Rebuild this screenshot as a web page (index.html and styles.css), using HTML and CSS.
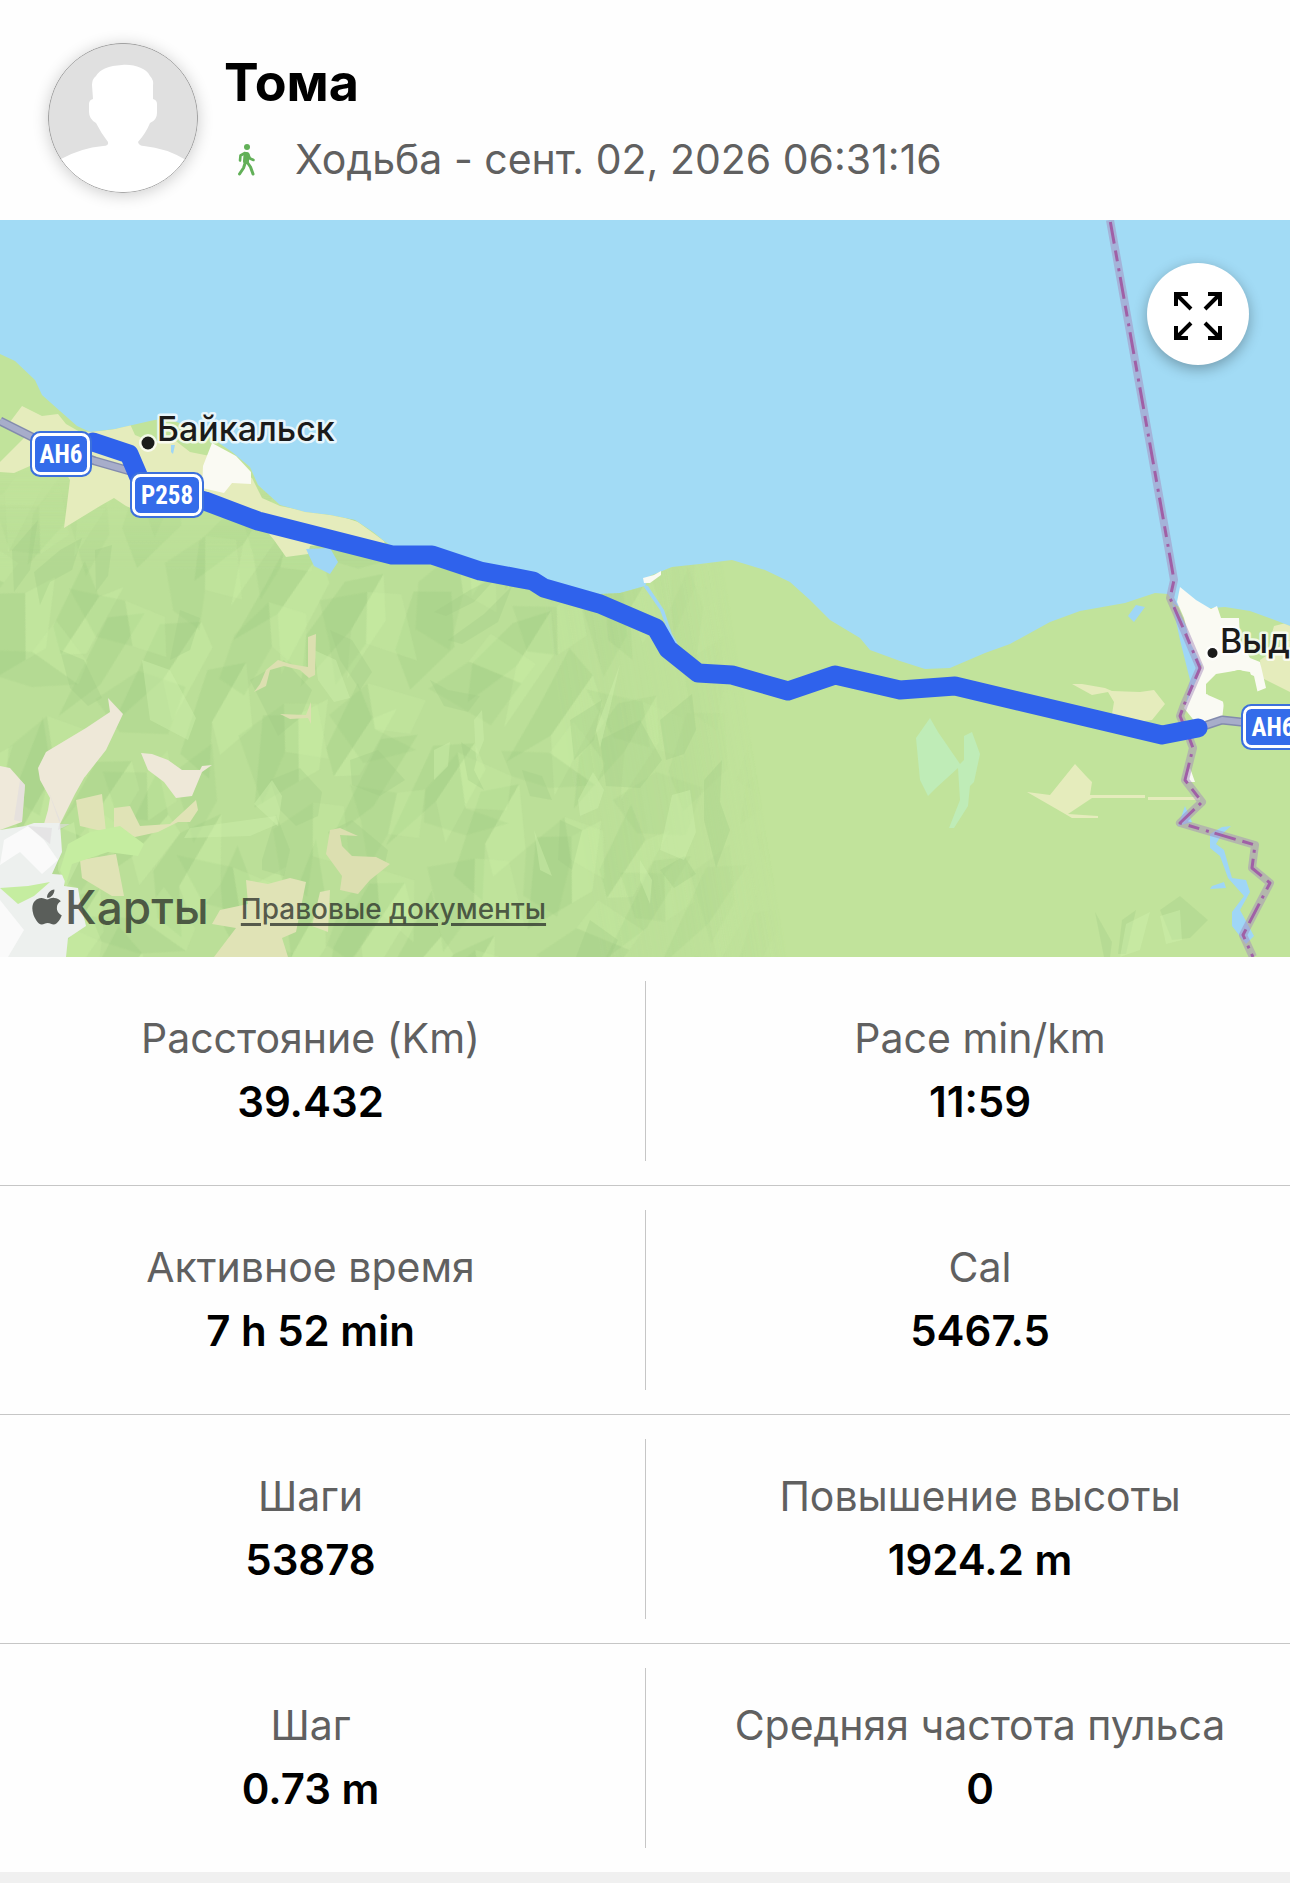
FILE: index.html
```html
<!DOCTYPE html>
<html lang="ru">
<head>
<meta charset="utf-8">
<meta name="viewport" content="width=device-width, initial-scale=1">
<title>Тома – Ходьба</title>
<link rel="stylesheet" href="styles.css">
</head>
<body>
<main class="activity">
  <header class="profile">
    <svg class="avatar" viewBox="0 0 150 150" aria-hidden="true">
      <defs><clipPath id="avatar-clip"><circle cx="75" cy="75" r="75"/></clipPath></defs>
      <g clip-path="url(#avatar-clip)">
        <rect width="150" height="150" fill="#e0e0e0"/>
        <path fill="#fff" d="M74 22C86 21 98 25 102 33Q106 37 105 43V56Q109 57 109 61V70Q109 77 102 80Q98 90 90 99Q91 103 96 103Q118 105 138 117L150 150H0L13 116Q33 105 55 103Q61 103 60 99Q53 90 48 80Q41 76 41 69V61Q41 57 45 56L44 42Q44 36 48 33Q54 23 74 22Z"/>
      </g>
      <circle cx="75" cy="75" r="74.6" fill="none" stroke="#8b8b8b" stroke-width=".8"/>
    </svg>
    <div class="profile-text">
      <h1 class="name">Тома</h1>
      <p class="summary">
        <svg class="walk" viewBox="0 0 20 34" aria-hidden="true">
          <circle cx="11" cy="5" r="3" fill="#62b058"/>
          <g fill="none" stroke="#62b058" stroke-linecap="round" stroke-linejoin="round">
            <path stroke-width="6" d="M10.500 13L10 19"/>
            <path stroke-width="2.600" d="M9 11L4.500 13.500L4 18.500M12 12L14 16.500L17.500 18"/>
            <path stroke-width="3" d="M9.500 20L7.500 26L3.500 32M11 20L14.500 25L17 32"/>
          </g>
        </svg>
        <span>Ходьба - сент. 02, 2026 06:31:16</span>
      </p>
    </div>
  </header>

  <section class="map" aria-label="Карта маршрута">
    <svg class="map-canvas" viewBox="0 0 1290 737" preserveAspectRatio="xMidYMid slice">
      <defs>
        <path id="coast" d="M0 134L15 141L35 160L42 175L60 191L77 206L90 212L115 209L150 201L165 198L200 210L232 232L250 247L258 265L280 285L305 292L330 295L355 300L373 312L384 321L400 332L480 352L545 369L600 374L620 373L645 366L650 356L672 347L700 344L732 340L765 350L790 362L810 380L830 400L860 418L870 430L900 441L925 449L950 448L985 433L1010 424L1050 402L1080 391L1125 383L1155 373L1168 374L1174 384L1185 390L1225 387L1250 391L1280 402L1290 406V737H0Z"/>
        <clipPath id="land"><use href="#coast"/></clipPath>
        <linearGradient id="fade" gradientUnits="userSpaceOnUse" x1="560" y1="500" x2="745" y2="470">
          <stop offset="0" stop-color="#fff"/><stop offset=".5" stop-color="#999"/><stop offset="1" stop-color="#000"/>
        </linearGradient>
        <linearGradient id="fade-top" gradientUnits="userSpaceOnUse" x1="0" y1="250" x2="0" y2="350">
          <stop offset="0" stop-color="#000"/><stop offset="1" stop-color="#000" stop-opacity="0"/>
        </linearGradient>
        <mask id="hills" maskUnits="userSpaceOnUse" x="0" y="0" width="1290" height="737">
          <rect width="1290" height="737" fill="url(#fade)"/>
          <rect width="1290" height="350" fill="url(#fade-top)"/>
        </mask>
        <g id="facets">
          <g fill="#8fc178" fill-opacity=".2">
            <path d="M8 10L36 2L24 42L12 70L2 48Z"/><path d="M60 0L84 20L70 48L52 66L58 30Z"/>
            <path d="M30 84L56 70L48 104L22 132L12 112Z"/><path d="M100 26L126 8L118 52L138 76L112 72L92 50Z"/>
            <path d="M84 84L112 92L100 130L74 152L80 118Z"/><path d="M150 20L176 36L194 74L168 62L150 42Z"/>
            <path d="M142 100L170 88L164 122L144 160L130 134Z"/><path d="M210 0L238 26L232 62L214 44Z"/>
            <path d="M200 90L230 82L252 108L232 138L206 122Z"/><path d="M10 160L42 150L32 186L8 218Z"/>
            <path d="M64 172L92 160L86 196L104 224L72 218Z"/><path d="M124 182L152 174L176 206L150 228Z"/>
            <path d="M188 146L212 160L202 196L186 184Z"/><path d="M226 168L254 158L244 202L222 226Z"/>
          </g>
          <g fill="#cdf0a8" fill-opacity=".34">
            <path d="M36 2L52 14L42 60L24 42Z"/><path d="M84 20L100 26L86 60L70 48Z"/>
            <path d="M56 70L74 90L60 136L48 104Z"/><path d="M126 8L150 42L140 66L118 52Z"/>
            <path d="M112 92L130 104L124 158L100 130Z"/><path d="M176 36L196 20L204 60L194 74Z"/>
            <path d="M170 88L188 110L178 146L164 122Z"/><path d="M238 26L256 50L248 80L232 62Z"/>
            <path d="M42 150L60 160L54 204L32 186Z"/><path d="M92 160L120 190L104 210L86 196Z"/>
            <path d="M212 160L228 150L222 190L202 196Z"/><path d="M152 174L170 160L188 196L176 206Z"/>
          </g>
        </g>
        <pattern id="relief" width="260" height="230" patternUnits="userSpaceOnUse" patternTransform="rotate(24) scale(1.15 1.9)">
          <use href="#facets"/>
        </pattern>
        <pattern id="relief-fine" width="260" height="230" patternUnits="userSpaceOnUse" patternTransform="translate(40 70) rotate(-22) scale(1.7 1.25)">
          <use href="#facets"/>
        </pattern>
      </defs>

      <rect width="1290" height="737" fill="#a2dbf5"/>
      <use href="#coast" fill="#c1e39b"/>

      <g clip-path="url(#land)">
        <rect width="1290" height="737" fill="#b2da94" fill-opacity=".42" mask="url(#hills)"/>
        <rect width="1290" height="737" fill="url(#relief)" mask="url(#hills)"/>
        <rect width="1290" height="737" fill="url(#relief-fine)" fill-opacity=".7" mask="url(#hills)"/>

        <g fill="#9fca85" fill-opacity=".3">
          <path d="M12 330L38 300L30 350L14 372ZM34 352L60 330L82 318L72 350L50 362L40 385ZM95 330L112 325L108 356L96 372Z"/>
          <path d="M60 430L84 440L102 478L88 486L70 468ZM180 390L200 398L190 430L170 440ZM250 460L284 440L312 470L300 498L278 516Z"/>
          <path d="M330 410L352 420L372 452L360 470L340 440ZM350 540L378 530L405 560L380 576L352 565ZM270 560L300 548L322 572L318 596L296 606L280 590Z"/>
          <path d="M328 612L352 600L388 630L384 648L350 644L334 630ZM262 640L276 594L290 630L284 656L262 650Z"/>
          <path d="M434 392L470 370L498 356L474 382L446 396ZM448 420L484 394L512 366L498 402L462 424ZM430 460L448 470L480 476L468 492L444 486Z"/>
          <path d="M461 522L478 534L474 550L484 570L468 560ZM522 550L542 556L552 580L530 576ZM600 520L640 500L662 540L640 568L606 566Z"/>
          <path d="M660 500L692 474L696 510L684 534L666 540ZM704 560L722 540L720 582L730 610L716 648L704 600ZM570 500L602 480L594 520L574 540Z"/>
          <path d="M590 700L618 720L610 737H576ZM660 650L684 636L696 654L674 668ZM560 600L582 610L572 650L558 640Z"/>
          <path d="M1095 692L1112 722L1110 737H1104ZM1160 690L1180 676L1208 700L1190 718L1172 720ZM1122 700L1136 690L1126 734H1118Z"/>
        </g>
        <g fill="#cff0ab" fill-opacity=".42">
          <path d="M142 440L170 450L196 498L188 520L150 500ZM272 560L282 576L278 606L254 584ZM314 430L336 440L350 478L334 482L318 460Z"/>
          <path d="M593 552L604 570L598 588L580 596L578 580ZM596 510L620 444L610 488L600 528ZM672 575L690 570L696 612L684 640L660 630Z"/>
          <path d="M534 610L552 656L540 650ZM640 640L652 660L650 684L640 660ZM474 500L482 490L484 520L476 540ZM434 530L450 522L448 546L434 560Z"/>
          <path d="M60 610L74 602L80 640L66 668L58 650ZM190 608L276 596L278 604L250 616L184 618Z"/>
          <path d="M1126 704L1150 692L1140 730L1120 737ZM1160 696L1180 690L1182 720L1166 724Z"/>
        </g>

        <!-- open ground -->
        <g fill="#e5ecbc">
          <path d="M22 186L42 196L58 194L66 204L80 212L100 211L115 209L130 204L135 215L152 222L172 218L190 232L210 236L252 258L262 278L280 286L310 292L340 296L358 302L384 321L388 336L334 322L310 326L308 334L286 337L274 320L260 303L200 288L140 292L126 286L114 278L100 286L64 308L70 260L64 250L30 246L14 253L0 252V242L26 216L10 202Z"/>
          <path d="M1072 464H1082L1105 468L1112 471L1140 472L1154 470L1165 484L1152 500L1134 502L1112 494L1114 482L1108 472L1092 475ZM1027 572L1050 575L1075 544L1086 556L1092 562L1090 575H1145V578H1092L1068 594L1098 596V598H1072L1060 591ZM1148 577H1200V580H1148ZM1260 440L1290 420V472L1262 458ZM1274 406L1290 402V420H1270Z"/>
        </g>
        <path fill="#e0e3b6" d="M76 580L102 574L106 612L80 606ZM114 588L130 586L140 606L170 604L196 580L198 590L190 602L178 602L158 612L135 617L114 612ZM80 640L116 634L124 676L112 676L82 658ZM246 660L268 664L290 658L306 662L296 712L282 718L288 737H214L236 708L212 704L220 690L248 684ZM320 672L330 670L328 712L312 706Z"/>
        <path fill="#eee8d8" d="M108 478L123 494L106 530L84 558L75 574L60 604L58 618H40L48 590L50 578L40 560L38 548L46 532L86 508L110 492ZM141 533L152 534L168 540L182 550L200 550L202 546L212 545L202 552L192 576L176 578L164 562L148 550Z"/>
        <path fill="#efe9da" d="M0 546L10 548L25 565L22 602L0 610Z"/>
        <path fill="#dcdfb0" d="M308 417L316 414L315 455L309 458L300 450L284 446L270 450L266 466L254 472L260 464L266 450L278 440L290 444L308 447ZM280 494L306 495L311 482V504L308 498L290 499ZM330 610L340 608L358 616L340 615L342 626L352 636L376 637L390 644L370 660L358 674L340 670L342 656L326 634Z"/>
        <path fill="#edf0ee" d="M0 610L25 606L34 603L60 603L62 632L52 654L66 655L64 666L78 668L80 680L86 706L68 718L66 737H0Z"/>
        <path fill="#fafafa" d="M4 620L28 606L44 620L58 640L42 654L20 632L0 645ZM0 680L24 710L8 737H0Z"/>
        <path fill="#c5eda0" d="M0 668L28 666L50 662L34 676L18 684ZM68 624L90 612L120 606L144 624L138 636L108 632L72 644L66 664L60 650Z"/>
        <path fill="#dfdce0" fill-opacity=".6" d="M58 610L70 604L60 604L48 570L60 600ZM20 560L14 600L22 602L25 565ZM28 606L50 624L52 608Z"/>
        <path fill="#fafaf3" d="M212 223L236 236L251 252V264L232 263L224 273L202 268L203 246Z"/>
        <path fill="#bfecb7" d="M930 498L938 512L960 544L964 540V516L972 512L980 534L974 562L970 566L968 586L954 608H949L960 580L958 548L936 568L928 576L920 560L916 518Z"/>
        <g fill="#9fd6f6">
          <path d="M306 329L330 328L338 342L330 354L314 346ZM171 225L175 225L173 234L171 232ZM1128 396L1136 385L1145 387L1134 402ZM642 364L648 366L664 390L672 414L678 424L672 422L660 390Z"/>
          <path d="M1172 382L1184 402L1202 440L1196 470L1186 484L1190 460L1180 420ZM1185 586L1192 602L1178 606ZM1210 614L1222 607L1231 606L1222 614L1216 624L1224 630L1232 658L1246 660L1250 672L1240 690L1254 716L1246 724L1232 706V692L1244 676L1228 658L1220 636L1210 628ZM1212 666L1224 662L1226 668L1210 669Z"/>
        </g>
      </g>
      <path fill="#fafaf3" d="M643 358L654 355L661 351V355L650 363H644ZM1180 367L1196 380L1211 389L1217 386L1221 398H1239L1240 420L1250 438L1260 442L1266 468L1256 472L1250 452L1238 450L1218 456L1206 468L1208 475L1224 482L1222 500L1200 508L1184 488L1200 452L1202 446L1190 422L1184 398L1177 382ZM1190 548L1195 562L1188 562L1185 558Z"/>
      <path fill="#c1e39b" d="M1206 464L1216 454L1240 450L1254 456L1258 474L1290 474V484L1224 486L1222 478L1206 474Z"/>

      <!-- region border -->
      <g fill="none" stroke-linejoin="round">
        <path stroke="#a58bbe" stroke-opacity=".5" stroke-width="8" d="M1110 0L1167 320L1174 360L1170 378L1184 410L1200 448L1184 485L1180 496L1190 520L1193 528L1185 560L1202 582L1180 603L1255 625L1252 648L1270 663L1243 715L1253 737"/>
        <path stroke="#a060a6" stroke-width="3" stroke-dasharray="22 7 11 7 3 6" stroke-dashoffset="-2" d="M1110 0L1167 320L1174 360L1170 378L1184 410L1200 448L1184 485L1180 496L1190 520L1193 528L1185 560L1202 582L1180 603L1255 625L1252 648L1270 663L1243 715L1253 737"/>
      </g>

      <!-- highway -->
      <g fill="none" stroke-linejoin="round">
        <path stroke="#838bad" stroke-width="9" d="M0 201L40 221L95 241L130 251M1198 508L1222 500L1250 503"/>
        <path stroke="#a7adca" stroke-width="6" d="M0 201L40 221L95 241L130 251M1198 508L1222 500L1250 503"/>
        <path stroke="#2f62ec" stroke-width="19" stroke-linecap="round" d="M93 222L129 234L141 262L205 281L258 301L392 335H432L480 351L533 361L544 368L600 384L656 408L668 429L698 453L732 455L788 471L835 455L900 470L955 466L1162 515L1198 508"/>
      </g>

      <g class="shield">
        <rect x="30" y="211" width="62" height="46" rx="10"/><rect class="shield-rim" x="33.500" y="214.500" width="55" height="39" rx="7"/>
        <text x="61" y="243">AH6</text>
        <rect x="130" y="252" width="74" height="46" rx="10"/><rect class="shield-rim" x="133.500" y="255.500" width="67" height="39" rx="7"/>
        <text x="167" y="284">P258</text>
        <rect x="1241" y="484" width="62" height="46" rx="10"/><rect class="shield-rim" x="1244.500" y="487.500" width="55" height="39" rx="7"/>
        <text x="1273" y="516">AH6</text>
      </g>

      <g class="place">
        <circle cx="148" cy="223" r="6.500"/><text x="157" y="221">Байкальск</text>
        <circle cx="1212.500" cy="433" r="5"/><text x="1220" y="433">Выд</text>
      </g>
    </svg>

    <button class="expand" type="button" aria-label="Развернуть карту">
      <svg viewBox="0 0 50 50" aria-hidden="true">
        <path d="M15 3H3V15M3 3L18 18M35 3H47V15M47 3L32 18M15 47H3V35M3 47L18 32M35 47H47V35M47 47L32 32"/>
      </svg>
    </button>

    <div class="attribution">
      <span class="brand">
        <svg viewBox="0 32 384 448" aria-hidden="true"><path d="M318.700 268.700c-.2-36.700 16.400-64.400 50-84.800-18.800-26.900-47.200-41.700-84.700-44.600-35.500-2.800-74.300 20.700-88.500 20.700-15 0-49.400-19.700-76.400-19.700C63.300 141.200 4 184.800 4 273.500q0 39.300 14.400 81.200c12.800 36.700 59 126.700 107.200 125.200 25.200-.6 43-17.900 75.800-17.900 31.800 0 48.300 17.900 76.400 17.900 48.600-.7 90.400-82.500 102.600-119.300-65.200-30.700-61.700-90-61.700-91.900zm-56.600-164.200c27.300-32.400 24.800-61.900 24-72.500-24.100 1.400-52 16.400-67.900 34.900-17.500 19.800-27.800 44.300-25.600 71.900 26.100 2 49.900-11.400 69.500-34.300z"/></svg>Карты</span>
      <a class="legal" href="#legal">Правовые документы</a>
    </div>
  </section>

  <section class="stats" aria-label="Показатели">
    <dl class="row">
      <div class="stat"><dt>Расстояние (Km)</dt><dd>39.432</dd></div>
      <div class="stat"><dt>Pace min/km</dt><dd>11:59</dd></div>
    </dl>
    <dl class="row">
      <div class="stat"><dt>Активное время</dt><dd>7 h 52 min</dd></div>
      <div class="stat"><dt>Cal</dt><dd>5467.5</dd></div>
    </dl>
    <dl class="row">
      <div class="stat"><dt>Шаги</dt><dd>53878</dd></div>
      <div class="stat"><dt>Повышение высоты</dt><dd>1924.2 m</dd></div>
    </dl>
    <dl class="row">
      <div class="stat"><dt>Шаг</dt><dd>0.73 m</dd></div>
      <div class="stat"><dt>Средняя частота пульса</dt><dd>0</dd></div>
    </dl>
  </section>
</main>
</body>
</html>
```
FILE: styles.css
```css
* {
  box-sizing: border-box;
}

body {
  margin: 0;
  min-height: 100vh;
  background: #f0f0f0;
  color: #000;
  font-family: Inter, Roboto, "Liberation Sans", sans-serif;
  font-size: 41px;
}

.activity {
  background: #fefefe;
}

.profile {
  display: flex;
  gap: 26px;
  padding: 43px 48px 27px;
}

.avatar {
  flex: none;
  width: 150px;
  height: 150px;
  border-radius: 50%;
  background: #fff;
  box-shadow: 0 2px 16px rgba(0, 0, 0, .2);
}

.profile-text {
  display: flex;
  flex-direction: column;
  gap: 12px;
  padding-top: 8px;
}

.name {
  margin: 0;
  font-size: 52px;
  font-weight: 700;
  line-height: 64px;
}

.summary {
  display: flex;
  align-items: center;
  gap: 39px;
  margin: 0;
  padding-left: 12px;
  color: #606060;
  line-height: 64px;
}

.walk {
  flex: none;
  width: 20px;
  height: 34px;
}

.map {
  position: relative;
  overflow: hidden;
  aspect-ratio: 1290 / 737;
}

.map-canvas {
  display: block;
  width: 100%;
  height: 100%;
}

.shield rect {
  fill: #3c70dc;
}

.shield .shield-rim {
  fill: #346cea;
  stroke: #fff;
  stroke-width: 3px;
}

.shield text {
  fill: #fff;
  font: 700 25px "Liberation Sans Narrow", "Roboto Condensed", Roboto, sans-serif;
  text-anchor: middle;
}

.place {
  fill: #1b1b1b;
  stroke: #fff;
  stroke-opacity: .75;
  stroke-width: 5px;
  stroke-linejoin: round;
  paint-order: stroke;
  font-size: 34px;
  font-weight: 500;
}

.expand {
  position: absolute;
  top: 43px;
  right: 41px;
  display: grid;
  place-items: center;
  width: 102px;
  height: 102px;
  padding: 4px 0 0;
  border: 0;
  border-radius: 50%;
  background: #fff;
  box-shadow: 0 4px 14px rgba(0, 0, 0, .3);
}

.expand svg {
  width: 50px;
  height: 50px;
  fill: none;
  stroke: #000;
  stroke-width: 4px;
}

.attribution {
  position: absolute;
  bottom: 16px;
  left: 32px;
  display: flex;
  align-items: center;
  gap: 32px;
  color: rgba(40, 45, 40, .75);
  line-height: 64px;
}

.brand {
  display: flex;
  align-items: center;
  gap: 3px;
  font-size: 46px;
  font-weight: 500;
}

.brand svg {
  width: 30px;
  height: 36px;
  fill: currentColor;
}

.legal {
  padding-top: 4px;
  color: inherit;
  font-size: 28px;
  font-weight: 500;
  text-decoration-thickness: 3px;
  text-underline-offset: 4px;
}

.row {
  display: grid;
  grid-template-columns: 1fr 1fr;
  margin: 0;
  padding: 24px 0;
}

.row + .row {
  border-top: 1px solid #c6c6c6;
}

.stat {
  padding: 26px 24px 28px 0;
  line-height: 63px;
  text-align: center;
}

.stat + .stat {
  padding-right: 0;
  padding-left: 24px;
  border-left: 1px solid #c6c6c6;
}

.stat dt {
  color: #606060;
}

.stat dd {
  margin: 0;
  font-size: 42px;
  font-weight: 600;
}
```
